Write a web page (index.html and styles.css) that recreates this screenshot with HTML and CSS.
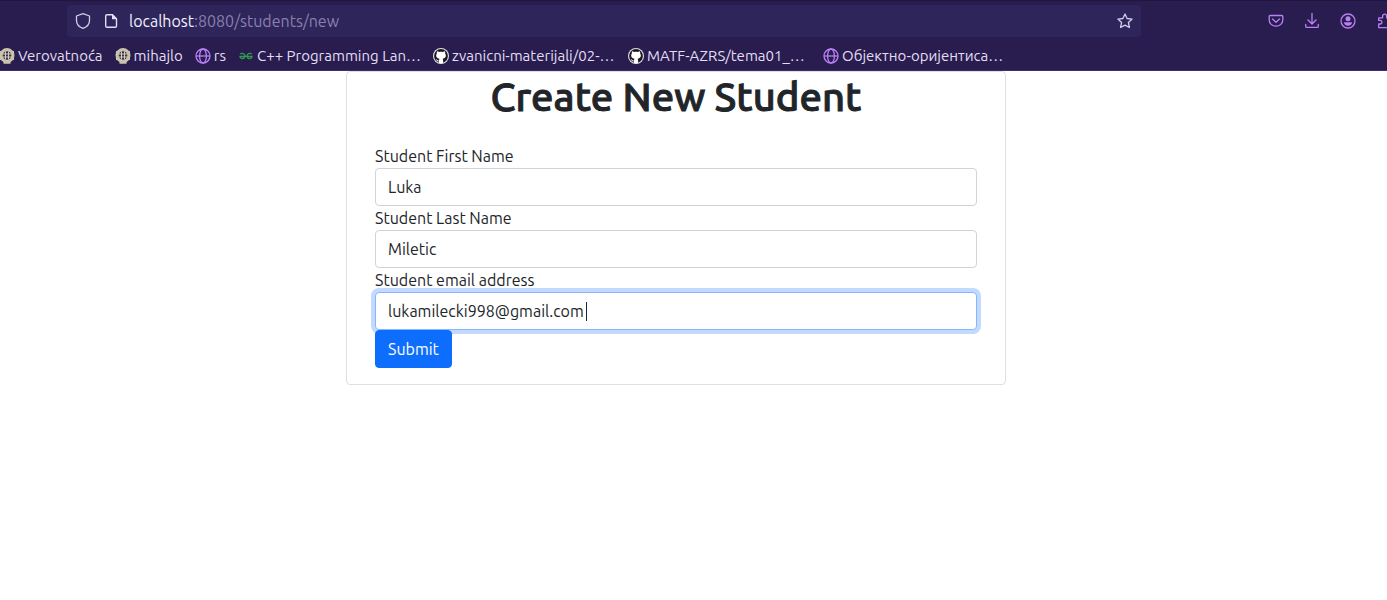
FILE: index.html
```html
<!DOCTYPE html>
<html lang="en">
<head>
<meta charset="utf-8">
<meta name="viewport" content="width=device-width, initial-scale=1">
<title>Create New Student</title>
<link rel="stylesheet" href="styles.css">
</head>
<body>
<svg class="sprite" aria-hidden="true">
  <symbol id="seal" viewBox="0 0 16 16">
    <circle cx="8" cy="7.5" r="5.700" fill="none" stroke="#c9c3ad" stroke-width="3.600"/>
    <path d="M1 3h14v9H1zM4.500 12h7v3.800h-7z" fill="#c9c3ad"/>
    <circle cx="8" cy="7.500" r="4.300" fill="#39304d"/>
    <path d="M6.500 3.500v8M9.500 3.500v8M4 6h8M4 9h8" stroke="#d5cfba" stroke-width="1" fill="none"/>
  </symbol>
  <symbol id="globe" viewBox="0 0 16 16">
    <g fill="none" stroke="#b980f5" stroke-width="1.300"><circle cx="8" cy="8" r="7"/><ellipse cx="8" cy="8" rx="3.400" ry="7"/><path d="M1 8h14"/></g>
  </symbol>
  <symbol id="octocat" viewBox="0 0 16 16">
    <circle cx="8" cy="8" r="8" fill="#e2e0e6"/>
    <circle cx="8" cy="8" r="6.900" fill="#1b1820"/>
    <path d="M4 3.200c.8 0 1.500.4 2 .8 1.300-.3 2.700-.3 4 0 .5-.4 1.200-.8 2-.8.3.7.3 1.400.1 2 1.500 2.300.7 5.200-2.500 5.500.5.6.5 1.200.5 2v2.200a7 7 0 0 1-4.200 0v-1.600c-1.600.3-2-.3-2.400-1.100-.2-.4-.5-.6-.8-.8.7-.3 1.300.1 1.700.7.4.6.9.8 1.600.5 0-.7.1-1.200.5-1.900C3.300 10.400 2.400 7.500 3.900 5.200c-.2-.6-.2-1.300.1-2z" fill="#fff"/>
  </symbol>
</svg>
<header class="browser">
  <div class="toolbar">
    <div class="address">
      <svg class="icon" viewBox="0 0 16 16"><path d="M8 .7 14.500 3v4.500c0 3.500-2.700 6.500-6.500 7.800C4.200 14 1.500 11 1.500 7.500V3z" fill="none" stroke="#d4cce6" stroke-width="1.300" stroke-linejoin="round"/></svg>
      <svg class="icon page-icon" viewBox="0 0 16 16"><path d="M4 1.700h5.500l4 4V13a1.300 1.300 0 0 1-1.300 1.300H4A1.300 1.300 0 0 1 2.700 13V3A1.300 1.300 0 0 1 4 1.700z" fill="none" stroke="#e4ddf4" stroke-width="1.400"/><path d="M9 1v5.200h5.200z" fill="#e4ddf4"/></svg>
      <span class="url">localhost<span class="path">:8080/students/new</span></span>
      <svg class="icon" viewBox="0 0 16 16"><path d="m8 1 2.100 4.500 5 .6-3.700 3.400 1 5L8 12.100l-4.400 2.400 1-5L.9 6.100l5-.6z" fill="none" stroke="#d4cce6" stroke-width="1.300" stroke-linejoin="round"/></svg>
    </div>
    <div class="tools">
      <svg class="icon" viewBox="0 0 16 16"><path d="M2.300 2.500h11.400c.7 0 1.100.4 1.100 1.100V7a6.800 6.200 0 0 1-13.600 0V3.600c0-.7.4-1.100 1.100-1.100zM4.500 6 8 9.300 11.500 6"/></svg>
      <svg class="icon" viewBox="0 0 16 16"><path d="M8 .5v10.300M4 7l4 4 4-4M1.700 11.500v1.700c0 .8.4 1.200 1.200 1.200h10.200c.8 0 1.200-.4 1.200-1.200v-1.700"/></svg>
      <svg class="icon" viewBox="0 0 16 16"><circle cx="8" cy="8" r="7"/><circle cx="8" cy="5.700" r="2.500" class="solid"/><path class="solid" d="M4 9.300h8c0 2-1.700 3.400-4 3.400S4 11.300 4 9.300z"/></svg>
      <svg class="icon" viewBox="0 0 16 16"><path d="M2.700 14.700V11h1.400a1.600 1.600 0 0 0 0-3.600H2.700V4.900h3.900V3.200a2 2 0 0 1 4 0v1.700H14v9.800z"/></svg>
    </div>
  </div>
  <nav class="bookmarks" aria-label="Bookmarks">
    <a href="#" class="bookmark"><svg class="icon"><use href="#seal"/></svg>Verovatnoća</a>
    <a href="#" class="bookmark"><svg class="icon"><use href="#seal"/></svg>mihajlo</a>
    <a href="#" class="bookmark"><svg class="icon"><use href="#globe"/></svg>rs</a>
    <a href="#" class="bookmark long"><svg class="icon" viewBox="0 0 16 16"><path d="M2.200 5.800c2-1 4.800-.3 4.800 2.200 0 3.200-4.600 3.400-5 .3h12c-.4 3.100-5 2.900-5-.3 0-2.500 2.800-3.200 4.800-2.200" fill="none" stroke="#2f9a4a" stroke-width="1.300"/></svg>C++ Programming Lan…</a>
    <a href="#" class="bookmark long"><svg class="icon"><use href="#octocat"/></svg>zvanicni-materijali/02-…</a>
    <a href="#" class="bookmark long"><svg class="icon"><use href="#octocat"/></svg>MATF-AZRS/tema01_…</a>
    <a href="#" class="bookmark long"><svg class="icon"><use href="#globe"/></svg>Објектно-оријентиса…</a>
  </nav>
</header>
<main class="page">
  <section class="card">
    <h1>Create New Student</h1>
    <form class="form">
      <label for="first">Student First Name</label>
      <input id="first" type="text" value="Luka">
      <label for="last">Student Last Name</label>
      <input id="last" type="text" value="Miletic">
      <label for="email">Student email address</label>
      <div class="field">
        <input id="email" class="active" type="text" value="lukamilecki998@gmail.com">
        <span class="caret"></span>
      </div>
      <button type="submit">Submit</button>
    </form>
  </section>
</main>
</body>
</html>
```
FILE: styles.css
```css
* { box-sizing: border-box; }
body {
  margin: 0;
  background: #fff;
  color: #212529;
  font: 16px/24px Ubuntu, "Noto Sans", sans-serif;
}
.sprite { display: none; }
.icon { width: 16px; height: 16px; flex: none; }

.browser {
  background: #291d4f;
  border-top: 1px solid #21163f;
  border-bottom: 1px solid #3d2c76;
  color: #e4ddf4;
  font-size: 15px;
  line-height: 20px;
  overflow: hidden;
}
.toolbar { display: flex; align-items: center; padding: 4px 0 4px 67px; }
.address {
  flex: 1;
  display: flex;
  align-items: center;
  height: 32px;
  padding: 0 8px;
  border-radius: 4px;
  background: #2e255b;
}
.page-icon { margin: 0 10px 0 12px; }
.url { flex: 1; color: #f3effc; font-size: 16px; }
.path { color: #8a80ac; }
.tools { display: flex; gap: 20px; margin: 0 -5px 0 127px; }
.tools .icon { fill: none; stroke: #b980f5; stroke-width: 1.3; stroke-linecap: round; stroke-linejoin: round; }
.tools .solid { fill: #b980f5; stroke: none; }
.bookmarks { display: flex; gap: 12px; height: 29px; margin-left: -1px; align-items: center; }
.bookmark {
  display: flex;
  align-items: center;
  gap: 3px;
  flex: none;
  color: inherit;
  text-decoration: none;
  white-space: nowrap;
}
.long { width: 183px; }

.page { padding: 0 35px 24px 0; }
.card {
  max-width: 660px;
  margin: 0 auto;
  padding: 0 28px 16px;
  border: 1px solid #dedfe0;
  border-radius: 4px;
}
h1 {
  margin: 0 0 22px;
  font-size: 40px;
  line-height: 50px;
  font-weight: 500;
  text-align: center;
  -webkit-text-stroke: 1px #212529;
}
.form { display: flex; flex-direction: column; align-items: stretch; }
.field { position: relative; }
input {
  width: 100%;
  height: 38px;
  padding: 6px 12px;
  border: 1px solid #ced4da;
  border-radius: 4px;
  background: #fff;
  color: inherit;
  font: inherit;
  outline: 0;
}
input:focus, .active { border-color: #86b7fe; box-shadow: 0 0 0 4px #c2daff; }
.caret { position: absolute; left: 211px; top: 10px; width: 1px; height: 19px; background: #212529; }
button {
  position: relative;
  align-self: flex-start;
  height: 38px;
  padding: 6px 12px;
  border: 1px solid #0d6efd;
  border-radius: 4px;
  background: #0d6efd;
  color: #fff;
  font: inherit;
}
```
